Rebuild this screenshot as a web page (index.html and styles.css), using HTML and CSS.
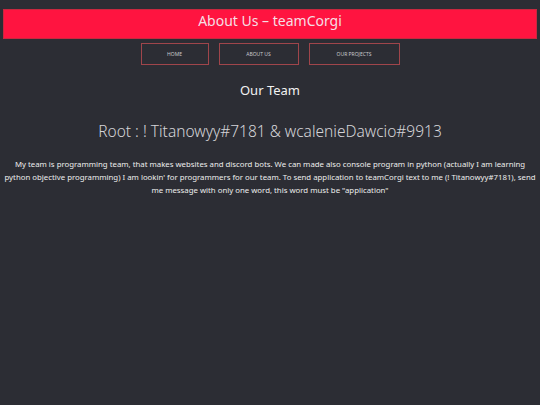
FILE: index.html
```html
<!DOCTYPE html>
<html lang="en">
<head>
  <meta charset="UTF-8">
  <meta name="viewport" content="width=device-width, initial-scale=1.0">
  <title>About Us - teamCorgi</title>
  <link rel="stylesheet" href="styles.css">
</head>
<body>
  <header class="top-bar">
    <h1>About Us – teamCorgi</h1>
  </header>

  <nav class="menu">
    <a href="#" class="menu-btn btn-home">HOME</a>
    <a href="#" class="menu-btn btn-about">ABOUT US</a>
    <a href="#" class="menu-btn btn-projects">OUR PROJECTS</a>
  </nav>

  <h2 class="team-title">Our Team</h2>

  <p class="root">Root : ! Titanowyy#7181 &amp; wcalenieDawcio#9913</p>

  <p class="about">My team is programming team, that makes websites and discord bots. We can made also console program in python (actually I am learning python objective programming) I am lookin' for programmers for our team. To send application to teamCorgi text to me (! Titanowyy#7181), send me message with only one word, this word must be "application"</p>
</body>
</html>
```

FILE: styles.css
```css
body {
  margin: 0;
  padding: 9px 3px 0;
  background-color: #2c2d34;
  color: #e6e6e6;
  font-family: 'Noto Sans', 'Open Sans', sans-serif;
  text-align: center;
}

.top-bar {
  background-color: #ff1440;
  border: 1px solid #c8283f;
  height: 28px;
}

.top-bar h1 {
  margin: 0;
  font-size: 14px;
  font-weight: normal;
  line-height: 21px;
  color: #f6dfe4;
}

.menu {
  display: flex;
  justify-content: center;
  gap: 10px;
  margin-top: 4px;
}

.menu-btn {
  display: block;
  height: 20px;
  line-height: 20px;
  border: 1px solid #a0454b;
  color: #c9c9cc;
  font-size: 5px;
  text-decoration: none;
}

.btn-home {
  width: 66px;
}

.btn-about {
  width: 78px;
}

.btn-projects {
  width: 89px;
}

.team-title {
  margin: 16px 0 0;
  font-size: 13px;
  font-weight: normal;
  line-height: 18px;
  color: #f2f2f2;
}

.root {
  margin: 21px 0 0;
  font-size: 15.5px;
  font-weight: 300;
  line-height: 22px;
  color: #d4d4d8;
}

.about {
  margin: 16px 0 0;
  font-size: 7.8px;
  line-height: 13px;
  color: #ededed;
}
```
